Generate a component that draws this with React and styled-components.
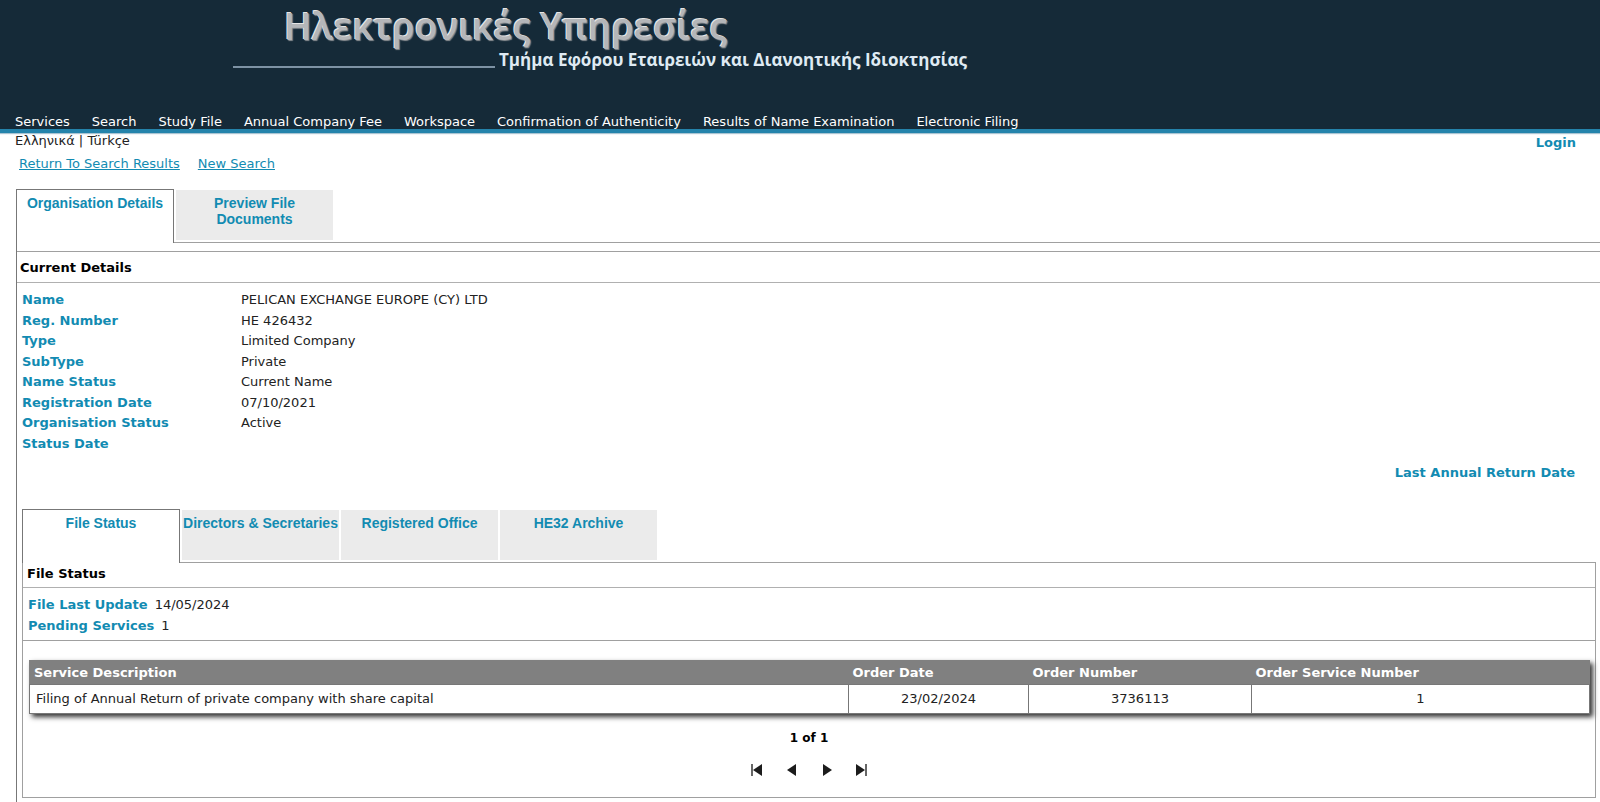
import React from "react";
import styled, { createGlobalStyle } from "styled-components";

const GlobalStyle = createGlobalStyle`
  :root {
    --color-header: #152a38;
    --color-accent: #128bb2;
    --color-line: #a0a0a0;
    --color-tab: #ebebeb;
    --color-table-head: #808080;
  }

  * {
    box-sizing: border-box;
  }

  body {
    margin: 0;
    background: white;
    color: #222;
    font: 12px/16px Verdana, "DejaVu Sans", sans-serif;
  }
`;

const Page = styled.div`
  display: flex;
  flex-direction: column;
  min-height: 100vh;
  overflow-x: hidden;
`;

const Header = styled.header`
  background: var(--color-header);
  border-bottom: 4px solid #2483ab;
  box-shadow: 0 1px 1px #a9c4d2;
  color: white;
`;

const Title = styled.h1`
  margin: 0;
  padding: 0 0 0 284px;
  color: #b4b6b9;
  font: 600 37px/52px "Open Sans", "Noto Sans", sans-serif;
  text-shadow: -1px -1px 0 #e6e6e6, 1px 1px 1px #8a8e92;
`;

const Subtitle = styled.div`
  display: flex;
  gap: 4px;
  padding-left: 233px;
  color: #dfeaf3;
  font: bold 17px/16px "Open Sans", "Noto Sans", sans-serif;
`;

const Rule = styled.span`
  width: 262px;
  border-bottom: 2px solid #7d92a4;
`;

const Nav = styled.nav`
  display: flex;
  gap: 22px;
  padding: 47px 15px 0;
  font-size: 13px;
  line-height: 14px;
`;

const NavLink = styled.a`
  color: white;
  text-decoration: none;
`;

const TopBar = styled.div`
  display: flex;
  justify-content: space-between;
  padding: 0 24px 0 15px;
  font-size: 13px;
`;

const Languages = styled.div`
  a {
    color: inherit;
    text-decoration: none;
  }
`;

const Login = styled.a`
  padding-top: 2px;
  color: var(--color-accent);
  font-weight: bold;
  text-decoration: none;
`;

const SearchLinks = styled.div`
  display: flex;
  gap: 18px;
  padding: 5px 19px 17px;
  font-size: 13px;

  a {
    color: var(--color-accent);
  }
`;

const Main = styled.main`
  flex: 1;
  padding-left: 16px;
`;

const Tabs = styled.div`
  display: flex;
  align-items: flex-end;
`;

const Tab = styled.button`
  width: ${props => (props.$active ? 158 : 157)}px;
  height: ${props => (props.$active ? 54 : 50)}px;
  margin: ${props => (props.$active ? "0 2px 0 0" : "0 2px 2px 0")};
  padding: 5px 0 0;
  display: flex;
  justify-content: center;
  border: solid #777;
  border-width: ${props => (props.$active ? "1px 1px 0" : 0)};
  background: ${props => (props.$active ? "white" : "var(--color-tab)")};
  color: var(--color-accent);
  font: bold 14px/16px Arial, "Liberation Sans", sans-serif;
  white-space: nowrap;

  span {
    width: min-content;
    white-space: normal;
  }
`;

const TabStrip = styled.div`
  flex: 1;
  display: flex;
  align-items: flex-end;
  align-self: stretch;
  margin-left: -2px;
  padding-left: 2px;
  border-bottom: 1px solid var(--color-line);
`;

const Panel = styled.section`
  border-left: 1px solid #777;
`;

const OrganisationPanel = styled(Panel)`
  min-height: calc(100vh - 242px);
  padding-top: 8px;
`;

const PanelTitle = styled.h2`
  margin: 0;
  padding: ${props => (props.$inner ? "3px 4px 5px" : "8px 3px 6px")};
  border-top: ${props => (props.$inner ? 0 : "1px solid var(--color-line)")};
  border-bottom: 1px solid #b0b0b0;
  color: black;
  font-size: 13px;
  font-weight: bold;
`;

const Details = styled.dl`
  display: grid;
  grid-template-columns: 219px 1fr;
  grid-auto-rows: 1fr;
  align-items: center;
  min-height: 164px;
  margin: 0;
  padding: 0 5px;
  font-size: 13px;
`;

const DetailsBox = styled.div`
  padding-top: 7px;
`;

const Term = styled.dt`
  color: var(--color-accent);
  font-weight: bold;
`;

const Value = styled.dd`
  margin: 0;
`;

const ReturnDate = styled.div`
  padding: 11px 25px 28px;
  color: var(--color-accent);
  font-size: 13px;
  font-weight: bold;
  text-align: right;
`;

const FileArea = styled.div`
  padding: 0 4px 4px 5px;
`;

const FilePanel = styled(Panel)`
  border: 1px solid var(--color-line);
  border-top: 0;
`;

const Summary = styled.dl`
  display: grid;
  gap: 5px;
  margin: 0;
  padding: 9px 5px 6px;
  border-bottom: 1px solid var(--color-line);
  font-size: 13px;

  div {
    display: flex;
    gap: 7px;
  }
`;

const Table = styled.table`
  width: calc(100% - 11px);
  margin: 19px 5px 0 6px;
  border-collapse: collapse;
  border: 1px solid var(--color-table-head);
  box-shadow: 3px 3px 5px #333;
  font-size: 13px;
  table-layout: fixed;
`;

const HeadCell = styled.th`
  width: ${props => props.$width};
  padding: 4px 4px 3px;
  background: var(--color-table-head);
  color: white;
  text-align: left;
`;

const Cell = styled.td`
  padding: 6px;
  border: 1px solid #777;
  text-align: ${props => (props.$center ? "center" : "left")};
`;

const Pager = styled.div`
  display: flex;
  flex-direction: column;
  align-items: center;
  gap: 16px;
  padding: 16px 0 19px;
  color: black;
  font-size: 12px;
  font-weight: bold;
`;

const PagerButtons = styled.div`
  display: flex;
  gap: 19px;
`;

const PagerButton = styled.button`
  width: 16px;
  height: 16px;
  padding: 0;
  border: 0;
  background: none;

  svg {
    display: block;
  }
`;

const menu = [
  "Services",
  "Search",
  "Study File",
  "Annual Company Fee",
  "Workspace",
  "Confirmation of Authenticity",
  "Results of Name Examination",
  "Electronic Filing"
];

const details = [
  ["Name", "PELICAN EXCHANGE EUROPE (CY) LTD"],
  ["Reg. Number", "HE 426432"],
  ["Type", "Limited Company"],
  ["SubType", "Private"],
  ["Name Status", "Current Name"],
  ["Registration Date", "07/10/2021"],
  ["Organisation Status", "Active"],
  ["Status Date", ""]
];

const columns = [
  ["Service Description", "auto"],
  ["Order Date", "180px"],
  ["Order Number", "223px"],
  ["Order Service Number", "338px"]
];

const pages = [
  { label: "First page", path: "M13 2v12L4 8z", bar: 2 },
  { label: "Previous page", path: "M12 2v12L3 8z" },
  { label: "Next page", path: "M4 2v12l9-6z" },
  { label: "Last page", path: "M2 2v12l9-6z", bar: 11 }
];

const App = () => (
  <Page>
    <GlobalStyle />
    <Header>
      <Title>Ηλεκτρονικές Υπηρεσίες</Title>
      <Subtitle>
        <Rule />
        Τμήμα Εφόρου Εταιρειών και Διανοητικής Ιδιοκτησίας
      </Subtitle>
      <Nav>
        {menu.map(item => (
          <NavLink href="#" key={item}>
            {item}
          </NavLink>
        ))}
      </Nav>
    </Header>
    <TopBar>
      <Languages>
        <a href="#">Ελληνικά</a> | <a href="#">Türkçe</a>
      </Languages>
      <Login href="#">Login</Login>
    </TopBar>
    <SearchLinks>
      <a href="#">Return To Search Results</a>
      <a href="#">New Search</a>
    </SearchLinks>
    <Main>
      <Tabs>
        <Tab $active>Organisation Details</Tab>
        <TabStrip>
          <Tab>
            <span>Preview&nbsp;File Documents</span>
          </Tab>
        </TabStrip>
      </Tabs>
      <OrganisationPanel>
        <PanelTitle>Current Details</PanelTitle>
        <DetailsBox>
          <Details>
            {details.map(([name, value]) => (
              <React.Fragment key={name}>
                <Term>{name}</Term>
                <Value>{value}</Value>
              </React.Fragment>
            ))}
          </Details>
        </DetailsBox>
        <ReturnDate>Last Annual Return Date</ReturnDate>
        <FileArea>
          <Tabs>
            <Tab $active>File Status</Tab>
            <TabStrip>
              <Tab>Directors &amp; Secretaries</Tab>
              <Tab>Registered Office</Tab>
              <Tab>HE32 Archive</Tab>
            </TabStrip>
          </Tabs>
          <FilePanel>
            <PanelTitle $inner>File Status</PanelTitle>
            <Summary>
              <div>
                <Term>File Last Update</Term>
                <Value>14/05/2024</Value>
              </div>
              <div>
                <Term>Pending Services</Term>
                <Value>1</Value>
              </div>
            </Summary>
            <Table>
              <thead>
                <tr>
                  {columns.map(([name, width]) => (
                    <HeadCell key={name} $width={width}>
                      {name}
                    </HeadCell>
                  ))}
                </tr>
              </thead>
              <tbody>
                <tr>
                  <Cell>
                    Filing of Annual Return of private company with share
                    capital
                  </Cell>
                  <Cell $center>23/02/2024</Cell>
                  <Cell $center>3736113</Cell>
                  <Cell $center>1</Cell>
                </tr>
              </tbody>
            </Table>
            <Pager>
              1 of 1
              <PagerButtons>
                {pages.map(({ label, path, bar }) => (
                  <PagerButton key={label} aria-label={label}>
                    <svg width="16" height="16" viewBox="0 0 16 16">
                      <path d={path} fill="#1c1c1c" />
                      {bar && (
                        <rect x={bar} y="2" width="2" height="12" fill="#666" />
                      )}
                    </svg>
                  </PagerButton>
                ))}
              </PagerButtons>
            </Pager>
          </FilePanel>
        </FileArea>
      </OrganisationPanel>
    </Main>
  </Page>
);

export default App;
